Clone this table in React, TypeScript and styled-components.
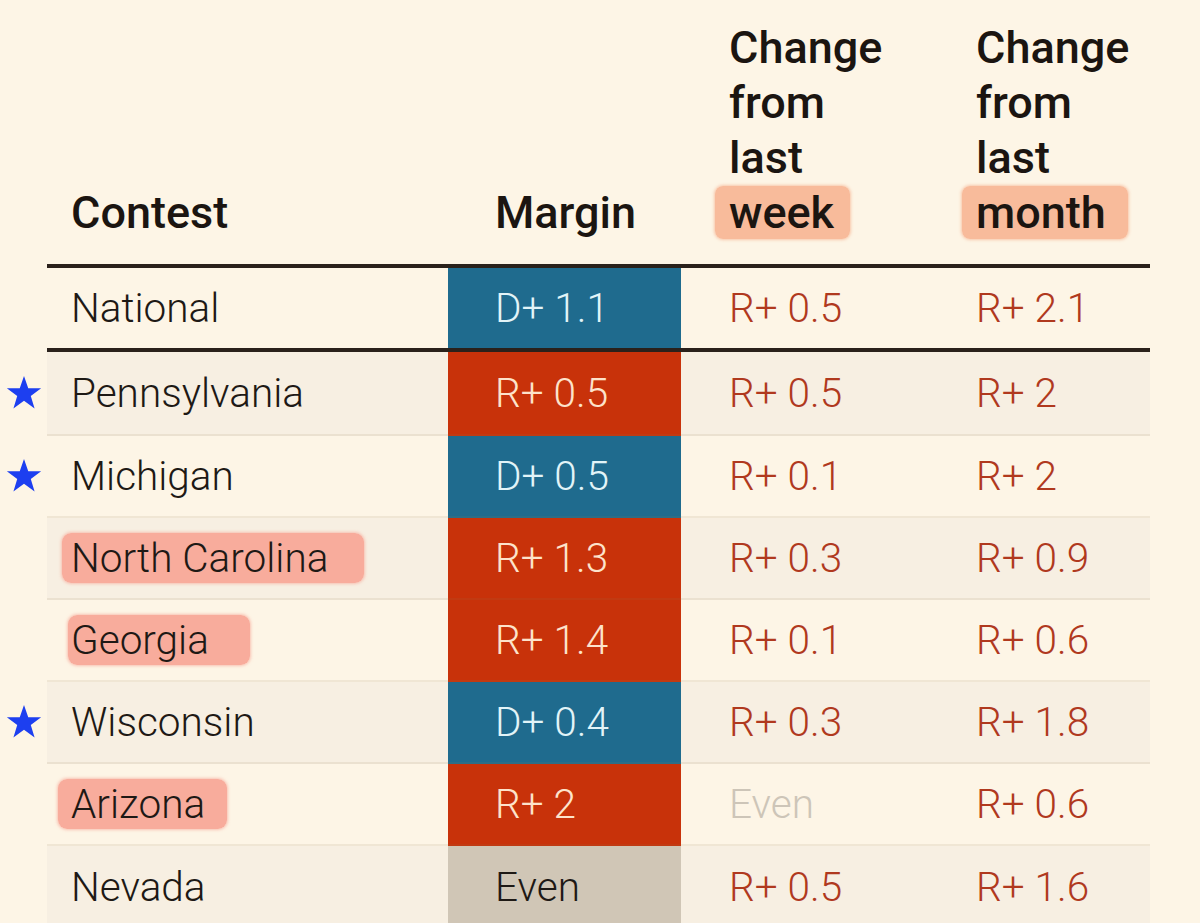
import React from "react";
import styled, { createGlobalStyle } from "styled-components";

const Global = createGlobalStyle`
  html, body { margin: 0; padding: 0; background: #fdf5e6; }
  body { font-family: Roboto, "Noto Sans", "Liberation Sans", sans-serif; }
`;

const Page = styled.div`
  width: 1200px;
  height: 923px;
  overflow: hidden;
  background: #fdf5e6;
`;

const Table = styled.table`
  border-collapse: separate;
  border-spacing: 0;
  table-layout: fixed;
  width: 1150px;
`;

const HeadCell = styled.th<{ $w: number; $pl: number }>`
  width: ${(p) => p.$w}px;
  height: 268px;
  box-sizing: border-box;
  padding: 0 0 24px ${(p) => p.$pl}px;
  vertical-align: bottom;
  text-align: left;
  font-size: 45px;
  font-weight: 500;
  line-height: 55px;
  color: #1b1511;
  border-bottom: ${(p) => (p.$w === 47 ? "none" : "4px solid #2a211b")};
`;

const HeadLine = styled.span`
  display: block;
  white-space: nowrap;
`;

const HeadMark = styled.span<{ $pr: number }>`
  background: #f8bb9b;
  border-radius: 8px;
  padding: 0 ${(p) => p.$pr}px 0 14px;
  margin-left: -14px;
  box-shadow: 0 0 3px 1px rgba(248, 187, 155, 0.8);
`;

const Row = styled.tr``;

const MarkerCell = styled.td`
  width: 47px;
  padding: 0;
  vertical-align: middle;
  text-align: center;
`;

const Cell = styled.td<{ $shade: boolean; $rule: "thick" | "thin" | "none"; $pl: number; $h: number }>`
  box-sizing: border-box;
  height: ${(p) => p.$h}px;
  padding: 0 0 0 ${(p) => p.$pl}px;
  vertical-align: middle;
  font-size: 40.5px;
  font-weight: 300;
  white-space: nowrap;
  background: ${(p) => (p.$shade ? "#f7efe2" : "#fdf5e6")};
  border-bottom: ${(p) =>
    p.$rule === "thick"
      ? "4px solid #2a211b"
      : p.$rule === "thin"
      ? "2px solid rgba(150, 120, 80, 0.12)"
      : "none"};
`;

const NameText = styled.span`
  color: #1e1915;
`;

const NameMark = styled.span<{ $pr: number; $pl: number }>`
  color: #1e1915;
  background: #f8ac9c;
  border-radius: 9px;
  padding: 1px ${(p) => p.$pr}px 1px ${(p) => p.$pl}px;
  margin-left: -${(p) => p.$pl}px;
  box-shadow: 0 0 3px 1px rgba(248, 172, 156, 0.7);
`;

type Party = "R" | "D" | "E";

const MarginCell = styled(Cell)<{ $party: Party }>`
  background: ${(p) =>
    p.$party === "R" ? "#c8320a" : p.$party === "D" ? "#1f6b8e" : "#d0c6b6"};
  color: ${(p) =>
    p.$party === "R" ? "#fde3cb" : p.$party === "D" ? "#e2f4f8" : "#1e1915"};
`;

const ChangeCell = styled(Cell)<{ $even: boolean }>`
  color: ${(p) => (p.$even ? "#cdc5b8" : "#b0391e")};
`;

const Star = () => (
  <svg width="36" height="35" viewBox="0 0 34 33" aria-hidden>
    <polygon
      points="17,1 21,12.6 33.2,12.6 23.4,19.9 27,31.5 17,24.4 7,31.5 10.6,19.9 0.8,12.6 13,12.6"
      fill="#1d3ff0"
    />
  </svg>
);

type Item = {
  name: string;
  star?: boolean;
  mark?: [number, number];
  margin: string;
  party: Party;
  week: string;
  month: string;
};

const national: Item = { name: "National", margin: "D+ 1.1", party: "D", week: "R+ 0.5", month: "R+ 2.1" };

const states: Item[] = [
  { name: "Pennsylvania", star: true, margin: "R+ 0.5", party: "R", week: "R+ 0.5", month: "R+ 2" },
  { name: "Michigan", star: true, margin: "D+ 0.5", party: "D", week: "R+ 0.1", month: "R+ 2" },
  { name: "North Carolina", mark: [9, 36], margin: "R+ 1.3", party: "R", week: "R+ 0.3", month: "R+ 0.9" },
  { name: "Georgia", mark: [3, 41], margin: "R+ 1.4", party: "R", week: "R+ 0.1", month: "R+ 0.6" },
  { name: "Wisconsin", star: true, margin: "D+ 0.4", party: "D", week: "R+ 0.3", month: "R+ 1.8" },
  { name: "Arizona", mark: [13, 22], margin: "R+ 2", party: "R", week: "Even", month: "R+ 0.6" },
  { name: "Nevada", margin: "Even", party: "E", week: "R+ 0.5", month: "R+ 1.6" },
];

const DataRow = ({
  item,
  shade,
  rule,
  h,
}: {
  item: Item;
  shade: boolean;
  rule: "thick" | "thin" | "none";
  h: number;
}) => (
  <Row>
    <MarkerCell>{item.star ? <Star /> : null}</MarkerCell>
    <Cell $shade={shade} $rule={rule} $pl={24} $h={h}>
      {item.mark ? (
        <NameMark $pl={item.mark[0]} $pr={item.mark[1]}>
          {item.name}
        </NameMark>
      ) : (
        <NameText>{item.name}</NameText>
      )}
    </Cell>
    <MarginCell $shade={shade} $rule={rule} $pl={47} $h={h} $party={item.party}>
      {item.margin}
    </MarginCell>
    <ChangeCell $shade={shade} $rule={rule} $pl={48} $h={h} $even={item.week === "Even"}>
      {item.week}
    </ChangeCell>
    <ChangeCell $shade={shade} $rule={rule} $pl={48} $h={h} $even={item.month === "Even"}>
      {item.month}
    </ChangeCell>
  </Row>
);

export default function App() {
  return (
    <Page>
      <Global />
      <Table>
        <thead>
          <tr>
            <HeadCell $w={47} $pl={0} />
            <HeadCell $w={401} $pl={24}>
              <HeadLine>Contest</HeadLine>
            </HeadCell>
            <HeadCell $w={233} $pl={47}>
              <HeadLine>Margin</HeadLine>
            </HeadCell>
            <HeadCell $w={247} $pl={48}>
              <HeadLine>Change</HeadLine>
              <HeadLine>from</HeadLine>
              <HeadLine>last</HeadLine>
              <HeadLine>
                <HeadMark $pr={16}>week</HeadMark>
              </HeadLine>
            </HeadCell>
            <HeadCell $w={222} $pl={48}>
              <HeadLine>Change</HeadLine>
              <HeadLine>from</HeadLine>
              <HeadLine>last</HeadLine>
              <HeadLine>
                <HeadMark $pr={22}>month</HeadMark>
              </HeadLine>
            </HeadCell>
          </tr>
        </thead>
        <tbody>
          <DataRow item={national} shade={false} rule="thick" h={84} />
          {states.map((s, i) => (
            <DataRow
              key={s.name}
              item={s}
              shade={i % 2 === 0}
              rule={i === states.length - 1 ? "none" : "thin"}
              h={i === 0 ? 84 : 82}
            />
          ))}
        </tbody>
      </Table>
    </Page>
  );
}
